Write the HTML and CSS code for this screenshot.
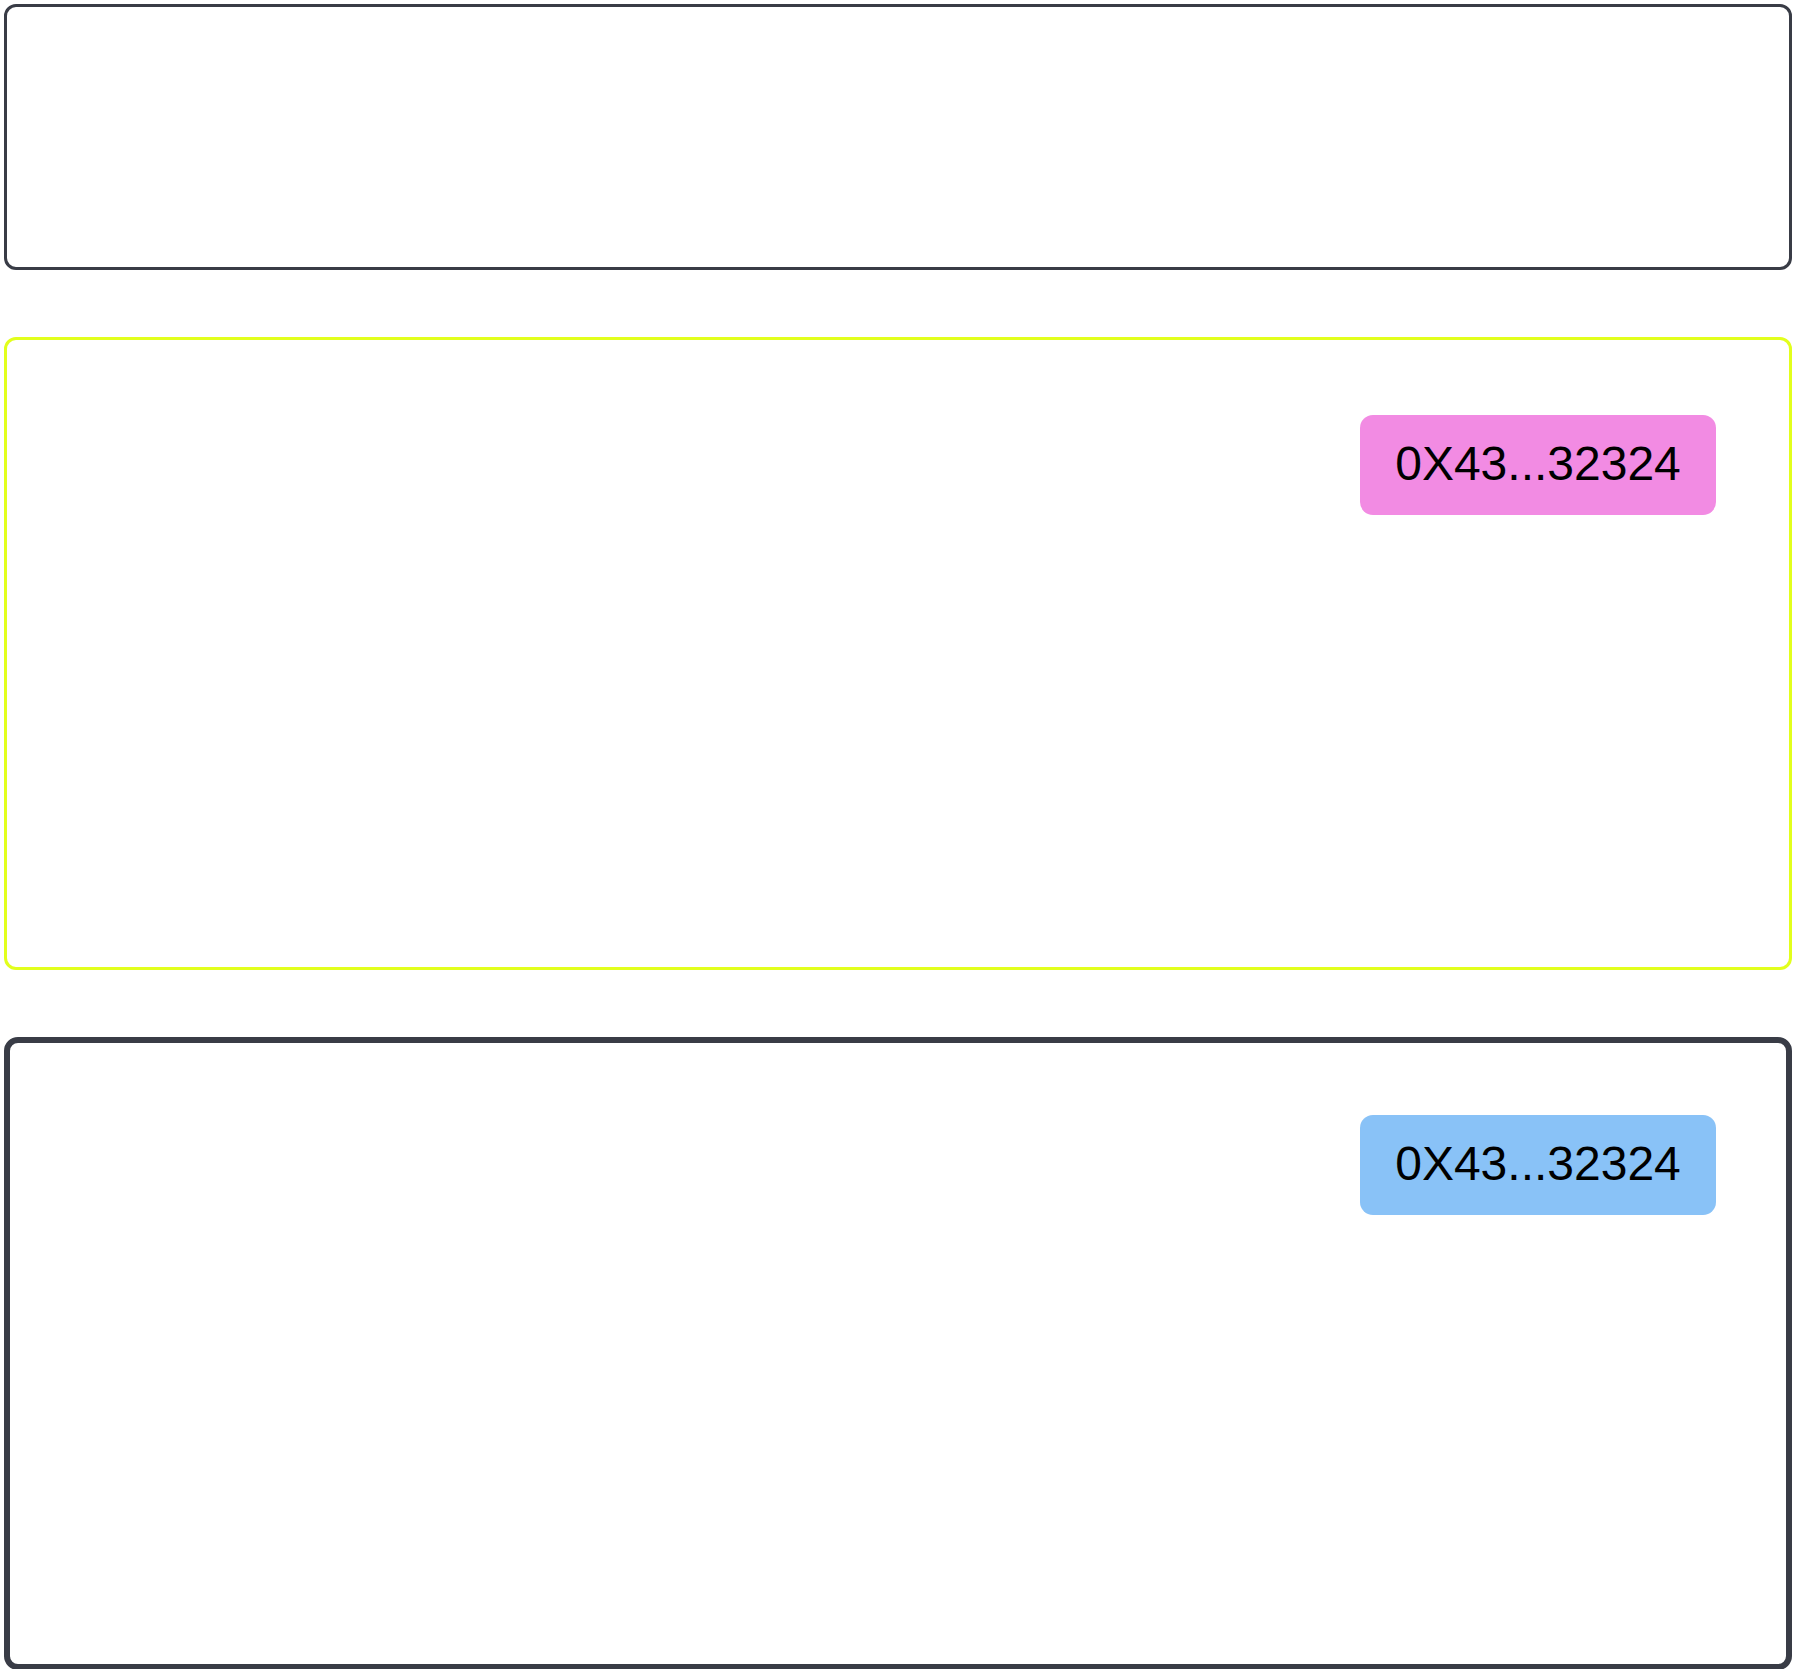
FILE: index.html
```html
<!DOCTYPE html>
<html lang="en">
<head>
<meta charset="utf-8">
<title>Addresses</title>
<link rel="stylesheet" href="styles.css">
</head>
<body>
<main class="stack">
  <section class="card card--plain"></section>
  <section class="card card--lime">
    <span class="badge badge--pink">0X43...32324</span>
  </section>
  <section class="card card--heavy">
    <span class="badge badge--blue">0X43...32324</span>
  </section>
</main>
</body>
</html>
```
FILE: styles.css
```css
* { box-sizing: border-box; }
html, body { margin: 0; background: #ffffff; }
body {
  font-family: "Liberation Sans", Arial, sans-serif;
  color: #000;
}
.stack {
  display: flex;
  flex-direction: column;
  gap: 67px;
  padding: 4px 0 0 4px;
}
.card {
  width: 1788px;
  border-radius: 12px;
  display: flex;
  justify-content: flex-end;
  align-items: flex-start;
}
.card--plain {
  height: 266px;
  border: 3px solid #393c46;
}
.card--lime {
  height: 633px;
  border: 3px solid #e2ff1c;
  padding: 75px 73px 0 0;
}
.card--heavy {
  height: 633px;
  border: 6px solid #393c46;
  border-radius: 14px;
  padding: 72px 70px 0 0;
}
.badge {
  width: 356px;
  height: 100px;
  border-radius: 13px;
  display: flex;
  align-items: center;
  justify-content: center;
  font-size: 48px;
  line-height: 1;
  padding-bottom: 2px;
}
.badge--pink { background: #f28be3; }
.badge--blue { background: #89c2f7; }
```
